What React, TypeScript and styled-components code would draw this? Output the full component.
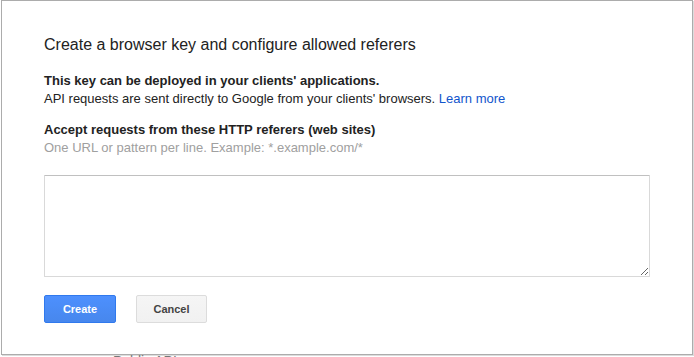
import React from "react";
import styled, { createGlobalStyle } from "styled-components";

const GlobalStyle = createGlobalStyle`
  html, body {
    margin: 0;
    padding: 0;
    background: #ffffff;
    font-family: "Liberation Sans", Arial, sans-serif;
    overflow: hidden;
  }
`;

const Page = styled.div`
  width: 694px;
  height: 357px;
  overflow: hidden;
`;

const Dialog = styled.div`
  box-sizing: border-box;
  margin-left: 1px;
  width: 692px;
  height: 355px;
  background: #fff;
  border: 1px solid #acacac;
  box-shadow: 1px 1px 0 #dcdcdc;
  padding: 34px 42px 0 42px;
  display: flex;
  flex-direction: column;
`;

const Title = styled.h2`
  margin: 0 0 17px 0;
  font-size: 16px;
  line-height: 20px;
  font-weight: normal;
  color: #222;
`;

const Section = styled.div<{ $gap: number }>`
  display: flex;
  flex-direction: column;
  margin-bottom: ${(p) => p.$gap}px;
`;

const Strong = styled.div`
  font-size: 13px;
  line-height: 18px;
  font-weight: bold;
  color: #222;
`;

const Text = styled.div<{ $muted?: boolean }>`
  font-size: 13px;
  line-height: 18px;
  color: ${(p) => (p.$muted ? "#a0a0a0" : "#222")};
`;

const Link = styled.a`
  color: #1155cc;
  text-decoration: none;
`;

const Area = styled.textarea`
  box-sizing: border-box;
  width: 606px;
  height: 102px;
  margin: 0 0 18px 0;
  border: 1px solid #d9d9d9;
  border-top: 1px solid #c0c0c0;
  border-radius: 1px;
  resize: vertical;
  outline: none;
  font-family: inherit;
  font-size: 13px;
`;

const Buttons = styled.div`
  display: flex;
  gap: 20px;
`;

const Button = styled.button<{ $primary?: boolean }>`
  box-sizing: border-box;
  height: 28px;
  min-width: ${(p) => (p.$primary ? 72 : 71)}px;
  padding: 0 8px;
  border-radius: 2px;
  font-family: inherit;
  font-size: 11px;
  font-weight: bold;
  cursor: pointer;
  border: 1px solid ${(p) => (p.$primary ? "#3079ed" : "#dcdcdc")};
  color: ${(p) => (p.$primary ? "#fff" : "#444")};
  background: ${(p) =>
    p.$primary
      ? "linear-gradient(#4d90fe, #4787ed)"
      : "linear-gradient(#f5f5f5, #f1f1f1)"};
`;

const Behind = styled.div`
  padding-left: 113px;
  font-size: 14px;
  line-height: 12px;
  color: #777;
`;

export default function App() {
  return (
    <Page>
      <GlobalStyle />
      <Dialog>
        <Title>Create a browser key and configure allowed referers</Title>
        <Section $gap={13}>
          <Strong>This key can be deployed in your clients' applications.</Strong>
          <Text>
            API requests are sent directly to Google from your clients' browsers.{" "}
            <Link href="#">Learn more</Link>
          </Text>
        </Section>
        <Section $gap={18}>
          <Strong>Accept requests from these HTTP referers (web sites)</Strong>
          <Text $muted>One URL or pattern per line. Example: *.example.com/*</Text>
        </Section>
        <Area />
        <Buttons>
          <Button $primary>Create</Button>
          <Button>Cancel</Button>
        </Buttons>
      </Dialog>
      <Behind>Public API</Behind>
    </Page>
  );
}
